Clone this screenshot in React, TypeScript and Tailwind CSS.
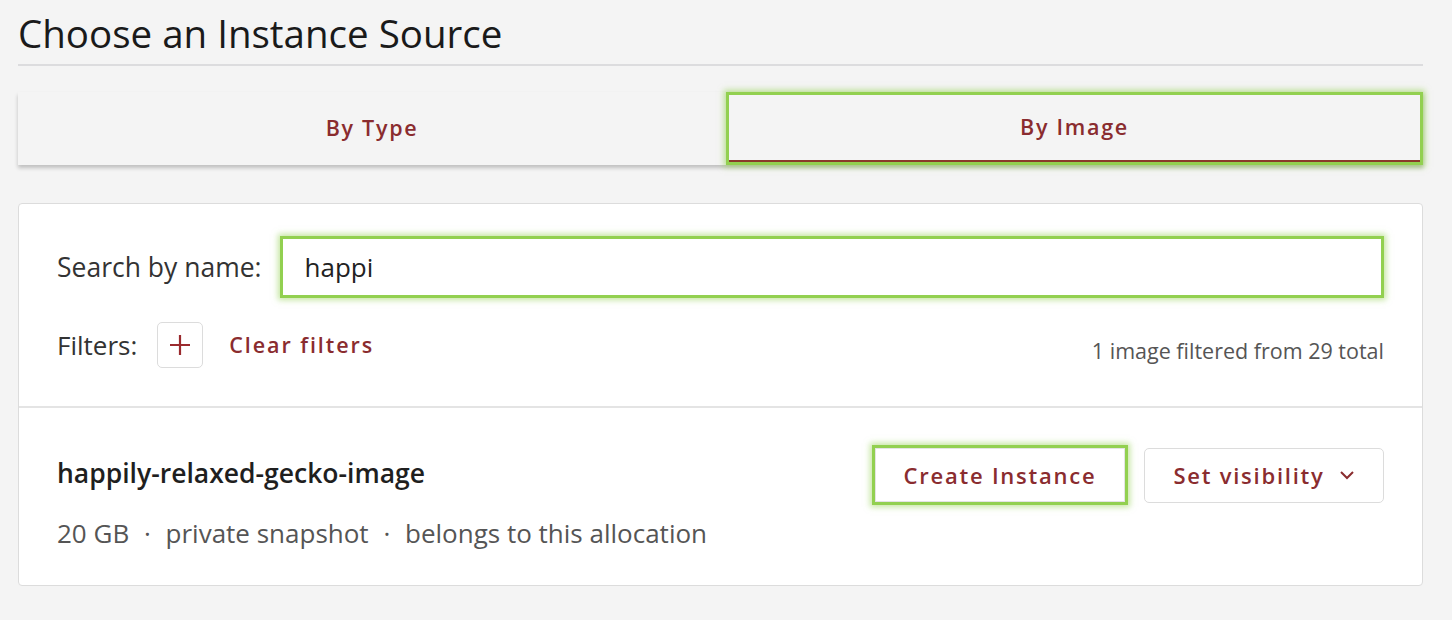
import React from "react";

const font = { fontFamily: '"Open Sans", "Noto Sans", sans-serif' };

export default function App() {
  return (
    <div className="min-h-[620px] w-full bg-[#f4f4f4] pl-[18px] pr-[29px] pt-[8px]" style={font}>
      <h1 className="text-[38.5px] leading-[50px] text-[#1a1a1a] font-normal">Choose an Instance Source</h1>
      <div className="mt-[6px] h-[2px] bg-[#dcdcde]" />
      <div className="mt-[26px] flex h-[73px] shadow-[0_3px_4px_rgba(0,0,0,0.22)]">
        <button className="flex-1 flex items-center justify-center text-[21.5px] tracking-[0.08em] text-[#8a2c2f] font-semibold">
          By Type
        </button>
        <div className="relative w-[697px] border-[3px] border-[#92d050] shadow-[0_0_6px_2px_rgba(146,208,80,0.6)]">
          <div className="flex h-full items-center justify-center border-b-[2px] border-[#8a3a2a] text-[21.5px] tracking-[0.08em] text-[#8a2c2f] font-semibold">
            By Image
          </div>
        </div>
      </div>

      <div className="mt-[38px] rounded-[4px] border border-[#dcdcdc] bg-white">
        <div className="pl-[38px] pr-[38px] pt-[32px] pb-[38px]">
          <div className="flex items-center">
            <span className="text-[26.5px] leading-[32px] text-[#333] mr-[18px]">Search by name:</span>
            <div className="flex-1 h-[62px] border-[3px] border-[#92d050] shadow-[0_0_6px_2px_rgba(146,208,80,0.55)] bg-white flex items-center pl-[22px]">
              <span className="text-[26px] leading-[32px] text-[#222]">happi</span>
            </div>
          </div>
          <div className="mt-[24px] flex h-[46px] items-center">
            <span className="text-[26px] leading-[32px] text-[#333]">Filters:</span>
            <div className="ml-[20px] flex h-[46px] w-[46px] items-center justify-center rounded-[5px] border border-[#dcdcdc]">
              <svg width="22" height="22" viewBox="0 0 22 22">
                <path d="M11 1v20M1 11h20" stroke="#9a2a2e" strokeWidth="2.2" />
              </svg>
            </div>
            <span className="ml-[26px] text-[21.5px] tracking-[0.09em] text-[#8a2c2f] font-semibold">Clear filters</span>
            <span className="ml-auto mt-[12px] text-[21.5px] text-[#555]">1 image filtered from 29 total</span>
          </div>
        </div>
        <div className="h-[2px] bg-[#e4e4e4]" />
        <div className="flex items-start pl-[38px] pr-[38px] pt-[37px] pb-[36px]">
          <div className="flex-1">
            <div className="mt-[12px] text-[26.5px] leading-[32px] text-[#1f1f1f] font-semibold">happily-relaxed-gecko-image</div>
            <div className="mt-[28px] text-[26px] leading-[32px] text-[#555]">
              20 GB <span className="mx-[8px]">·</span> private snapshot <span className="mx-[8px]">·</span> belongs to this allocation
            </div>
          </div>
          <div className="flex items-center">
            <div className="border-[3px] border-[#92d050] shadow-[0_0_6px_2px_rgba(146,208,80,0.55)] bg-white">
              <button className="h-[54px] w-[250px] border border-[#e4e4e4] text-[22px] tracking-[0.08em] text-[#8a2c2f] font-semibold">
                Create Instance
              </button>
            </div>
            <button className="ml-[16px] flex h-[55px] w-[240px] items-center justify-center gap-[14px] rounded-[5px] border border-[#dcdcdc] text-[22px] tracking-[0.08em] text-[#8a2c2f] font-semibold">
              Set visibility
              <svg width="16" height="10" viewBox="0 0 16 10">
                <path d="M2 2l6 6 6-6" stroke="#8a2c2f" strokeWidth="2" fill="none" />
              </svg>
            </button>
          </div>
        </div>
      </div>
    </div>
  );
}
